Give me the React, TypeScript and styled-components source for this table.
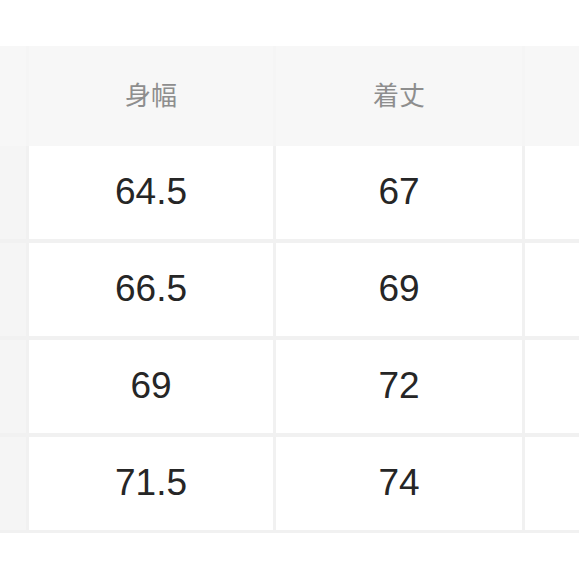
import { FC } from 'react';
import styled, { createGlobalStyle } from 'styled-components';

const GlobalStyle = createGlobalStyle`
    html, body {
        margin: 0;
        padding: 0;
        background: #ffffff;
        overflow: hidden;
    }
`;

const Page = styled.div`
    width: 579px;
    height: 579px;
    padding-top: 46px;
    box-sizing: border-box;
    background: #ffffff;
    overflow: hidden;
`;

const columns = '26px 244px 246px 120px';

const SizeTable = styled.div`
    display: grid;
    grid-template-columns: ${columns};
    grid-template-rows: 96px repeat(4, 93px);
    column-gap: 3px;
    row-gap: 4px;
    padding-bottom: 3px;
    width: 650px;
    background: #f1f1f1;
`;

const HeaderBar = styled.div`
    grid-column: 1 / -1;
    display: grid;
    grid-template-columns: ${columns};
    column-gap: 3px;
    margin-bottom: -4px;
    background: #f5f5f5;
`;

const HeadCell = styled.div`
    display: flex;
    align-items: center;
    justify-content: center;
    background: #f7f7f7;
    color: #8e8e8e;
    font-family: "Noto Sans CJK JP", "Liberation Sans", sans-serif;
    font-size: 26px;
    padding-bottom: 6px;
    box-sizing: border-box;
`;

const Row = styled.div`
    display: contents;
`;

const StubCell = styled.div`
    background: #f5f5f5;
`;

const Cell = styled.div`
    display: flex;
    align-items: center;
    justify-content: center;
    background: #ffffff;
    color: #262626;
    font-family: "Liberation Sans", Arial, sans-serif;
    font-size: 37px;
    padding-bottom: 2px;
    box-sizing: border-box;
`;

const headers = ['身幅', '着丈'];

const rows = [
    ['64.5', '67'],
    ['66.5', '69'],
    ['69', '72'],
    ['71.5', '74'],
];

const App: FC = () => {
    return (
        <Page>
            <GlobalStyle />
            <SizeTable>
                <HeaderBar>
                    <HeadCell />
                    {headers.map(h => (
                        <HeadCell key={h}>{h}</HeadCell>
                    ))}
                    <HeadCell />
                </HeaderBar>
                {rows.map((r, i) => (
                    <Row key={i}>
                        <StubCell />
                        {r.map((v, j) => (
                            <Cell key={j}>{v}</Cell>
                        ))}
                        <Cell />
                    </Row>
                ))}
            </SizeTable>
        </Page>
    );
};

export default App;
